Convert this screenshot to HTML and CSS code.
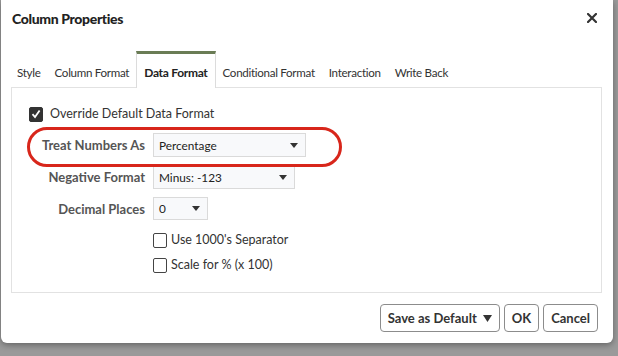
FILE: index.html
```html
<!DOCTYPE html>
<html lang="en">
<head>
<meta charset="utf-8">
<title>Column Properties</title>
<link rel="stylesheet" href="styles.css">
</head>
<body>
<div class="desk">
  <div class="dialog">
    <header class="dlg-head">
      <h1 class="dlg-title">Column Properties</h1>
      <button class="dlg-close" aria-label="Close">
        <svg width="10" height="10" viewBox="0 0 10 10"><path d="M1 1L9 9M9 1L1 9" stroke="#333" stroke-width="2.2" stroke-linecap="square"/></svg>
      </button>
    </header>
    <nav class="tabs">
      <span class="tab">Style</span>
      <span class="tab">Column Format</span>
      <span class="tab tab-active">Data Format</span>
      <span class="tab">Conditional Format</span>
      <span class="tab">Interaction</span>
      <span class="tab">Write Back</span>
    </nav>
    <section class="panel">
      <span class="mark" aria-hidden="true"></span>
      <label class="check check-top">
        <span class="box box-on"><svg width="10" height="10" viewBox="0 0 10 10"><path d="M1.5 5.2L4 8L8.6 1.5" fill="none" stroke="#fff" stroke-width="1.8"/></svg></span>
        <span>Override Default Data Format</span>
      </label>
      <div class="form">
        <span class="lbl">Treat Numbers As</span>
        <span class="sel sel-w1"><span>Percentage</span><i class="caret"></i></span>
        <span class="lbl">Negative Format</span>
        <span class="sel sel-w2"><span>Minus: -123</span><i class="caret"></i></span>
        <span class="lbl">Decimal Places</span>
        <span class="sel sel-w3"><span>0</span><i class="caret"></i></span>
        <label class="check check-a"><span class="box"></span><span>Use 1000's Separator</span></label>
        <label class="check check-b"><span class="box"></span><span>Scale for % (x 100)</span></label>
      </div>
    </section>
    <footer class="actions">
      <button class="btn">Save as Default <svg class="btn-caret" width="9" height="7" viewBox="0 0 9 7"><path d="M0 0H9L4.5 7Z" fill="#333"/></svg></button>
      <button class="btn">OK</button>
      <button class="btn">Cancel</button>
    </footer>
  </div>
</div>
</body>
</html>
```

FILE: styles.css
```css
* { box-sizing: border-box; }
html, body { margin: 0; padding: 0; }
body {
  width: 618px;
  height: 356px;
  overflow: hidden;
  background: #9a9a9a;
  font-family: Lato, "Noto Sans", sans-serif;
  color: #333;
}
.desk {
  padding-left: 1px;
  height: 356px;
}
.dialog {
  width: 612px;
  height: 343px;
  background: #fff;
  border-radius: 0 0 6px 6px;
  box-shadow: 0 2px 6px rgba(0,0,0,0.35);
  display: flex;
  flex-direction: column;
}
.dlg-head {
  height: 51px;
  display: flex;
  justify-content: space-between;
  align-items: flex-start;
  padding: 10px 16px 0 11px;
}
.dlg-title {
  margin: 0;
  font-size: 14px;
  line-height: 18px;
  font-weight: 900;
  color: #222;
  letter-spacing: -0.35px;
}
.dlg-close {
  border: 0;
  background: none;
  padding: 0;
  margin-top: 3px;
  width: 10px;
  height: 10px;
  display: flex;
}
.tabs {
  display: flex;
  margin-left: 9px;
  height: 36px;
  position: relative;
  z-index: 1;
}
.tab {
  font-size: 11.6px;
  letter-spacing: -0.3px;
  line-height: 16px;
  padding: 14px 7px 6px;
  color: #333;
  white-space: nowrap;
}
.tab-active {
  font-weight: 700;
  font-size: 12px;
  padding-top: 11px;
  border-top: 3px solid #6a7c55;
  border-left: 1px solid #dcdcdc;
  border-right: 1px solid #dcdcdc;
  background: #fff;
  height: 37px;
  color: #222;
}
.panel {
  position: relative;
  margin: 0 11px 0 10px;
  height: 206px;
  border: 1px solid #e2e2e2;
  padding: 18px 16px 0 17px;
}
.mark {
  position: absolute;
  left: 15px;
  top: 39px;
  width: 315px;
  height: 40px;
  border: 3px solid #d8261b;
  border-radius: 20px;
}
.check {
  display: flex;
  align-items: center;
  gap: 4px;
  font-size: 12.5px;
  line-height: 16px;
  color: #333;
}
.check-top { gap: 7px; }
.box {
  width: 14px;
  height: 15px;
  border: 1px solid #444;
  border-radius: 2px;
  background: #fff;
  display: flex;
  align-items: center;
  justify-content: center;
  flex: none;
}
.box-on {
  background: #333;
  border-color: #333;
}
.form {
  display: grid;
  grid-template-columns: 116px auto;
  column-gap: 8px;
  row-gap: 8px;
  margin-top: 11px;
}
.lbl {
  grid-column: 1;
  text-align: right;
  font-size: 13px;
  line-height: 16px;
  font-weight: 700;
  color: #555;
  align-self: center;
  white-space: nowrap;
}
.sel {
  grid-column: 2;
  height: 24px;
  border: 1px solid #dadada;
  background: #f8f9fb;
  display: flex;
  align-items: center;
  justify-content: space-between;
  padding: 0 7px 0 5px;
  font-size: 11.8px;
  color: #222;
}
.sel-w1 { width: 153px; }
.sel-w2 { width: 142px; }
.sel-w3 { width: 55px; height: 23px; }
.caret {
  width: 0;
  height: 0;
  border-left: 4.5px solid transparent;
  border-right: 4.5px solid transparent;
  border-top: 5px solid #333;
}
.check-a { grid-column: 2; margin-top: 4px; }
.check-b { grid-column: 2; margin-top: 1px; }
.actions {
  display: flex;
  justify-content: flex-end;
  gap: 4px;
  padding: 11px 15px 0 0;
}
.btn {
  height: 28px;
  border: 1px solid #8c8c8c;
  border-radius: 4px;
  background: #fff;
  font-family: Lato, "Noto Sans", sans-serif;
  font-size: 13px;
  font-weight: 700;
  color: #333;
  padding: 0 7px;
  display: flex;
  align-items: center;
}
.btn-caret { margin-left: 6px; }
```
